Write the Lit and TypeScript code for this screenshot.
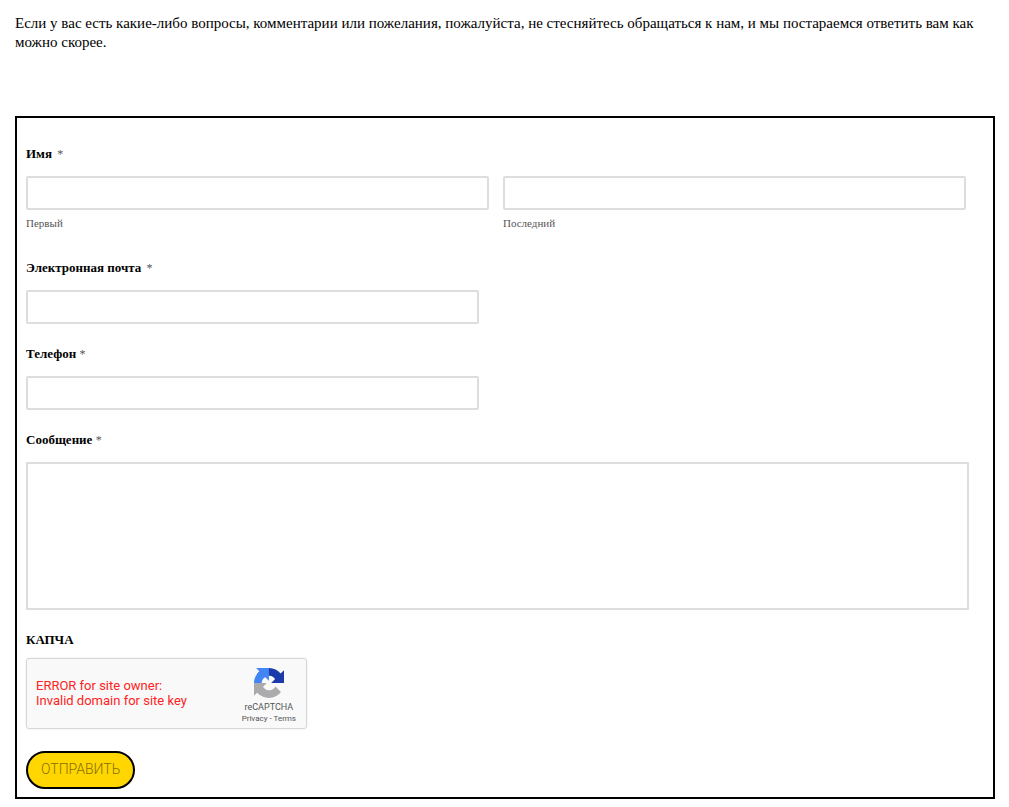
import { LitElement, html, css } from "lit";
import { customElement } from "lit/decorators.js";

@customElement("recaptcha-badge")
class RecaptchaBadge extends LitElement {
  static styles = css`
    :host {
      display: flex;
      justify-content: space-between;
      align-items: flex-start;
      box-sizing: border-box;
      width: 281px;
      height: 71px;
      padding: 9px 10px 0 9px;
      border: 1px solid #d6d6d6;
      border-radius: 3px;
      background: #f9f9f9;
      box-shadow: 0 0 3px rgba(0, 0, 0, 0.08);
      font-family: Roboto, sans-serif;
    }
    .error {
      margin: 10px 0 0;
      color: #f22;
      font-size: 13px;
      line-height: 15px;
    }
    .brand {
      display: flex;
      flex-direction: column;
      align-items: center;
      color: #555;
    }
    .logo {
      width: 30px;
      height: 30px;
      margin-bottom: 3px;
    }
    .name {
      font-size: 9px;
      line-height: 13px;
    }
    .links {
      font-size: 8px;
      line-height: 10px;
    }
    .links a {
      color: inherit;
      text-decoration: none;
    }
  `;

  render() {
    return html`
      <p class="error">ERROR for site owner:<br />Invalid domain for site key</p>
      <div class="brand">
        <svg class="logo" viewBox="0 0 64 64" aria-hidden="true">
          <path
            fill="#1c3aa9"
            d="M64 31.955l-.033-1.370V4.687l-7.160 7.160C50.948 4.674 42.033.093 32.050.093c-10.400 0-19.622 4.960-25.458 12.640l11.736 11.860a15.550 15.550 0 0 1 4.754-5.334c2.050-1.600 4.952-2.906 8.968-2.906.485 0 .860.057 1.135.163 4.976.393 9.288 3.140 11.828 7.124l-8.307 8.307L64 31.953"
          />
          <path
            fill="#4285f4"
            d="M31.862.094l-1.370.033H4.594l7.160 7.160C4.580 13.147 0 22.060 0 32.046c0 10.400 4.960 19.622 12.640 25.458L24.500 45.768a15.550 15.550 0 0 1-5.334-4.754c-1.600-2.050-2.906-4.952-2.906-8.968 0-.485.057-.860.163-1.135.393-4.976 3.140-9.288 7.124-11.828l8.307 8.307L31.860.095"
          />
          <path
            fill="#ababab"
            d="M.001 32.045l.033 1.370v25.898l7.160-7.160c5.860 7.173 14.774 11.754 24.760 11.754 10.400 0 19.622-4.960 25.458-12.640l-11.736-11.860a15.550 15.550 0 0 1-4.754 5.334c-2.050 1.600-4.952 2.906-8.968 2.906-.485 0-.860-.057-1.135-.163-4.976-.393-9.288-3.140-11.828-7.124l8.307-8.307c-10.522.040-22.400.066-27.295-.005"
          />
        </svg>
        <span class="name">reCAPTCHA</span>
        <span class="links"><a href="#privacy">Privacy</a> - <a href="#terms">Terms</a></span>
      </div>
    `;
  }
}

@customElement("app-root")
class AppRoot extends LitElement {
  static styles = css`
    :host {
      display: block;
      padding: 14px 14px 8px 15px;
      background: #fff;
      color: #000;
      font-family: "Liberation Serif", serif;
    }
    .intro {
      margin: 0 0 64px;
      font-size: 15px;
      line-height: 19px;
    }
    .form {
      display: flex;
      flex-direction: column;
      gap: 22px;
      padding: 28px 24px 8px 9px;
      border: 2px solid #000;
    }
    .field {
      display: flex;
      flex-direction: column;
      gap: 14px;
      min-width: 0;
      margin: 0;
      padding: 0;
      border: 0;
    }
    .names {
      margin-bottom: 9px;
    }
    .captcha {
      gap: 10px;
    }
    .label {
      padding: 0;
      font-size: 13px;
      font-weight: 700;
      line-height: 16px;
    }
    .star {
      color: #555;
      font-size: 12px;
      font-weight: 400;
    }
    .wide {
      margin-left: 2px;
    }
    .pair {
      display: grid;
      grid-template-columns: 1fr 1fr;
      gap: 14px;
      padding-right: 3px;
    }
    .part {
      display: flex;
      flex-direction: column;
      gap: 7px;
    }
    .sub {
      color: #555;
      font-size: 11px;
      line-height: 12px;
    }
    .box {
      box-sizing: border-box;
      width: 100%;
      height: 34px;
      margin: 0;
      padding: 4px 8px;
      border: 2px solid #ddd;
      border-radius: 2px;
      background: #fff;
      font: inherit;
    }
    .half {
      width: 48%;
    }
    .area {
      display: block;
      height: 148px;
      border-radius: 0;
      resize: none;
    }
    .send {
      align-self: flex-start;
      padding: 7px 13px 9px;
      border: 2px solid #000;
      border-radius: 20px;
      background: #ffd600;
      color: #857000;
      font-family: Roboto, sans-serif;
      font-size: 14px;
      font-weight: 300;
      line-height: 18px;
    }
  `;

  render() {
    return html`
      <p class="intro">
        Если у вас есть какие-либо вопросы, комментарии или пожелания, пожалуйста, не стесняйтесь обращаться к нам, и мы постараемся ответить вам как можно скорее.
      </p>
      <form class="form">
        <div class="field names" role="group" aria-labelledby="name-label">
          <span class="label" id="name-label">Имя <span class="star wide">*</span></span>
          <div class="pair">
            <div class="part">
              <input class="box" id="first" type="text" />
              <label class="sub" for="first">Первый</label>
            </div>
            <div class="part">
              <input class="box" id="last" type="text" />
              <label class="sub" for="last">Последний</label>
            </div>
          </div>
        </div>
        <div class="field">
          <label class="label" for="email">Электронная почта <span class="star wide">*</span></label>
          <input class="box half" id="email" type="email" />
        </div>
        <div class="field">
          <label class="label" for="phone">Телефон <span class="star">*</span></label>
          <input class="box half" id="phone" type="tel" />
        </div>
        <div class="field">
          <label class="label" for="message">Сообщение <span class="star">*</span></label>
          <textarea class="box area" id="message"></textarea>
        </div>
        <div class="field captcha">
          <span class="label">КАПЧА</span>
          <recaptcha-badge></recaptcha-badge>
        </div>
        <button class="send" type="button">ОТПРАВИТЬ</button>
      </form>
    `;
  }
}
